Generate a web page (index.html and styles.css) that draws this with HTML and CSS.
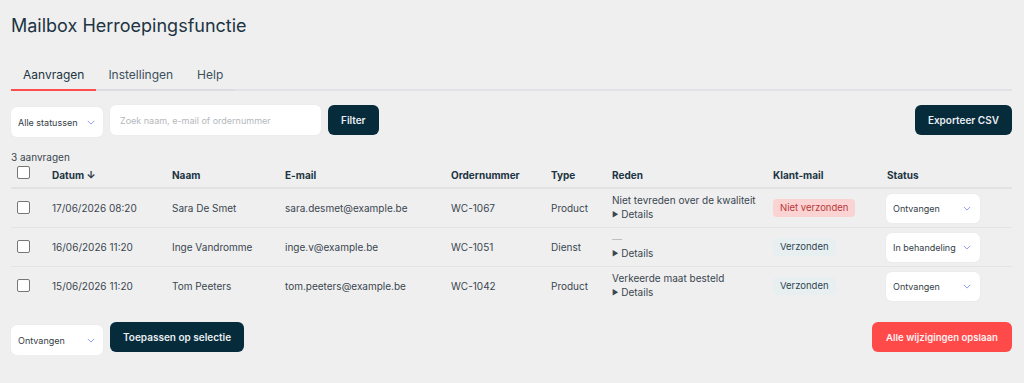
FILE: index.html
```html
<!DOCTYPE html>
<html lang="nl">
<head>
<meta charset="utf-8">
<title>Mailbox Herroepingsfunctie</title>
<link rel="stylesheet" href="styles.css">
</head>
<body>
<div class="page">
  <h1 class="title">Mailbox Herroepingsfunctie</h1>
  <nav class="tabs">
    <span class="tab active">Aanvragen</span>
    <span class="tab">Instellingen</span>
    <span class="tab">Help</span>
  </nav>

  <div class="toolbar">
    <div class="filters">
      <div class="select sel-status"><span>Alle statussen</span><svg class="chev" viewBox="0 0 10 6"><path d="M1 1l4 4 4-4" fill="none" stroke="#8f95f5" stroke-width="1.2"/></svg></div>
      <div class="search">Zoek naam, e-mail of ordernummer</div>
      <button class="btn dark">Filter</button>
    </div>
    <button class="btn dark">Exporteer CSV</button>
  </div>

  <div class="count">3 aanvragen</div>

  <table class="grid">
    <colgroup>
      <col class="c-chk"><col class="c-date"><col class="c-name"><col class="c-mail"><col class="c-order"><col class="c-type"><col class="c-reason"><col class="c-cmail"><col class="c-status">
    </colgroup>
    <thead>
      <tr>
        <th><span class="chk"></span></th>
        <th>Datum ↓</th>
        <th>Naam</th>
        <th>E-mail</th>
        <th>Ordernummer</th>
        <th>Type</th>
        <th>Reden</th>
        <th>Klant-mail</th>
        <th>Status</th>
      </tr>
    </thead>
    <tbody>
      <tr>
        <td><span class="chk"></span></td>
        <td>17/06/2026 08:20</td>
        <td>Sara De Smet</td>
        <td>sara.desmet@example.be</td>
        <td>WC-1067</td>
        <td>Product</td>
        <td><div class="reason">Niet tevreden over de kwaliteit</div><div class="details"><span class="tri">▶</span> Details</div></td>
        <td><span class="badge bad">Niet verzonden</span></td>
        <td><div class="select sel-row"><span>Ontvangen</span><svg class="chev" viewBox="0 0 10 6"><path d="M1 1l4 4 4-4" fill="none" stroke="#8f95f5" stroke-width="1.2"/></svg></div></td>
      </tr>
      <tr>
        <td><span class="chk"></span></td>
        <td>16/06/2026 11:20</td>
        <td>Inge Vandromme</td>
        <td>inge.v@example.be</td>
        <td>WC-1051</td>
        <td>Dienst</td>
        <td><div class="reason dash">—</div><div class="details"><span class="tri">▶</span> Details</div></td>
        <td><span class="badge ok">Verzonden</span></td>
        <td><div class="select sel-row"><span>In behandeling</span><svg class="chev" viewBox="0 0 10 6"><path d="M1 1l4 4 4-4" fill="none" stroke="#8f95f5" stroke-width="1.2"/></svg></div></td>
      </tr>
      <tr>
        <td><span class="chk"></span></td>
        <td>15/06/2026 11:20</td>
        <td>Tom Peeters</td>
        <td>tom.peeters@example.be</td>
        <td>WC-1042</td>
        <td>Product</td>
        <td><div class="reason">Verkeerde maat besteld</div><div class="details"><span class="tri">▶</span> Details</div></td>
        <td><span class="badge ok">Verzonden</span></td>
        <td><div class="select sel-row"><span>Ontvangen</span><svg class="chev" viewBox="0 0 10 6"><path d="M1 1l4 4 4-4" fill="none" stroke="#8f95f5" stroke-width="1.2"/></svg></div></td>
      </tr>
    </tbody>
  </table>

  <div class="footer">
    <div class="filters">
      <div class="select sel-bulk"><span>Ontvangen</span><svg class="chev" viewBox="0 0 10 6"><path d="M1 1l4 4 4-4" fill="none" stroke="#8f95f5" stroke-width="1.2"/></svg></div>
      <button class="btn dark">Toepassen op selectie</button>
    </div>
    <button class="btn red">Alle wijzigingen opslaan</button>
  </div>
</div>
</body>
</html>
```

FILE: styles.css
```css
* { box-sizing: border-box; }
html, body { margin: 0; padding: 0; background: #efefef; }
body {
  font-family: Inter, "Noto Sans", sans-serif;
  color: #3a4650;
  font-size: 10px;
}
.page { padding: 0 12px 0 11px; }

.title {
  margin: 0;
  padding-top: 14px;
  font-size: 18px;
  font-weight: 400;
  color: #1c3443;
  line-height: 24px;
}

.tabs {
  display: flex;
  margin-top: 29px;
  border-bottom: 2px solid #e2e2e6;
}
.tab {
  padding: 0 12px 7px;
  font-size: 12px;
  line-height: 15px;
  color: #3c4f5c;
  margin-bottom: -2px;
  border-bottom: 2px solid #dcdce4;
}
.tab.active { border-bottom-color: #ff4d4d; color: #1c3443; }

.toolbar, .footer {
  display: flex;
  justify-content: space-between;
  align-items: flex-start;
}
.toolbar { margin-top: 14px; }
.filters { display: flex; gap: 7px; align-items: flex-start; }

.select {
  display: flex;
  align-items: center;
  justify-content: space-between;
  background: #fff;
  border-radius: 6px;
  height: 30px;
  padding: 0 8px 0 7px;
  font-size: 9px;
  color: #333d45;
  white-space: nowrap;
  box-shadow: 0 0 0 1px #ececec;
}
.chev { width: 8px; height: 5px; flex: none; margin-left: 3px; }
.sel-status { width: 92px; margin-top: 2px; }
.sel-bulk { width: 92px; margin-top: 3px; }

.search {
  width: 211px;
  height: 30px;
  background: #fff;
  border-radius: 6px;
  padding: 0 10px;
  display: flex;
  align-items: center;
  color: #b4b8bc;
  font-size: 9px;
  box-shadow: 0 0 0 1px #ececec;
}

.btn {
  font-family: Inter, "Noto Sans", sans-serif;
  font-weight: 600;
  font-size: 10px;
  height: 30px;
  border: 0;
  border-radius: 6px;
  padding: 0 13px;
  color: #fff;
  cursor: pointer;
}
.btn.dark { background: #062b3b; color: #e9eef1; }
.btn.red { background: #ff4a4a; color: #fff1f1; padding: 0 14px; font-size: 9.6px; }

.count {
  margin-top: 14px;
  font-size: 10px;
  line-height: 12px;
  color: #3a4650;
}

.grid {
  width: 100%;
  border-collapse: collapse;
  table-layout: fixed;
}
.c-chk { width: 41px; }
.c-date { width: 120px; }
.c-name { width: 113px; }
.c-mail { width: 166px; }
.c-order { width: 100px; }
.c-type { width: 61px; }
.c-reason { width: 161px; }
.c-cmail { width: 114px; }
.c-status { width: auto; }

.grid th {
  text-align: left;
  font-weight: 700;
  color: #1c3443;
  height: 25px;
  padding: 0 0 1px;
  border-bottom: 2px solid #e2e2e4;
  vertical-align: middle;
}
.grid td {
  height: 39px;
  padding: 0;
  border-bottom: 1px solid #e4e4e6;
  vertical-align: middle;
  color: #3a4650;
}
.grid tbody tr:last-child td { border-bottom: 0; }

.chk {
  display: block;
  width: 13px;
  height: 13px;
  margin-left: 6px;
  border: 1px solid #767676;
  border-radius: 2px;
  background: #fff;
}
.grid th .chk { margin-top: -5px; }

.reason { line-height: 14px; }
.reason.dash { color: #b0b4b8; }
.details { line-height: 14px; }
.tri { font-size: 7px; vertical-align: 1px; }

.badge {
  display: inline-block;
  padding: 3px 7px;
  border-radius: 4px;
  line-height: 12px;
  font-size: 9.5px;
}
.badge.bad { background: #fbd3d3; color: #b63a3a; }
.badge.ok { background: #e8eff1; color: #2f4552; }

.sel-row { width: 94px; height: 29px; margin-left: -1px; margin-top: 1px; padding-right: 9px; }

.footer { margin-top: 17px; }
```
